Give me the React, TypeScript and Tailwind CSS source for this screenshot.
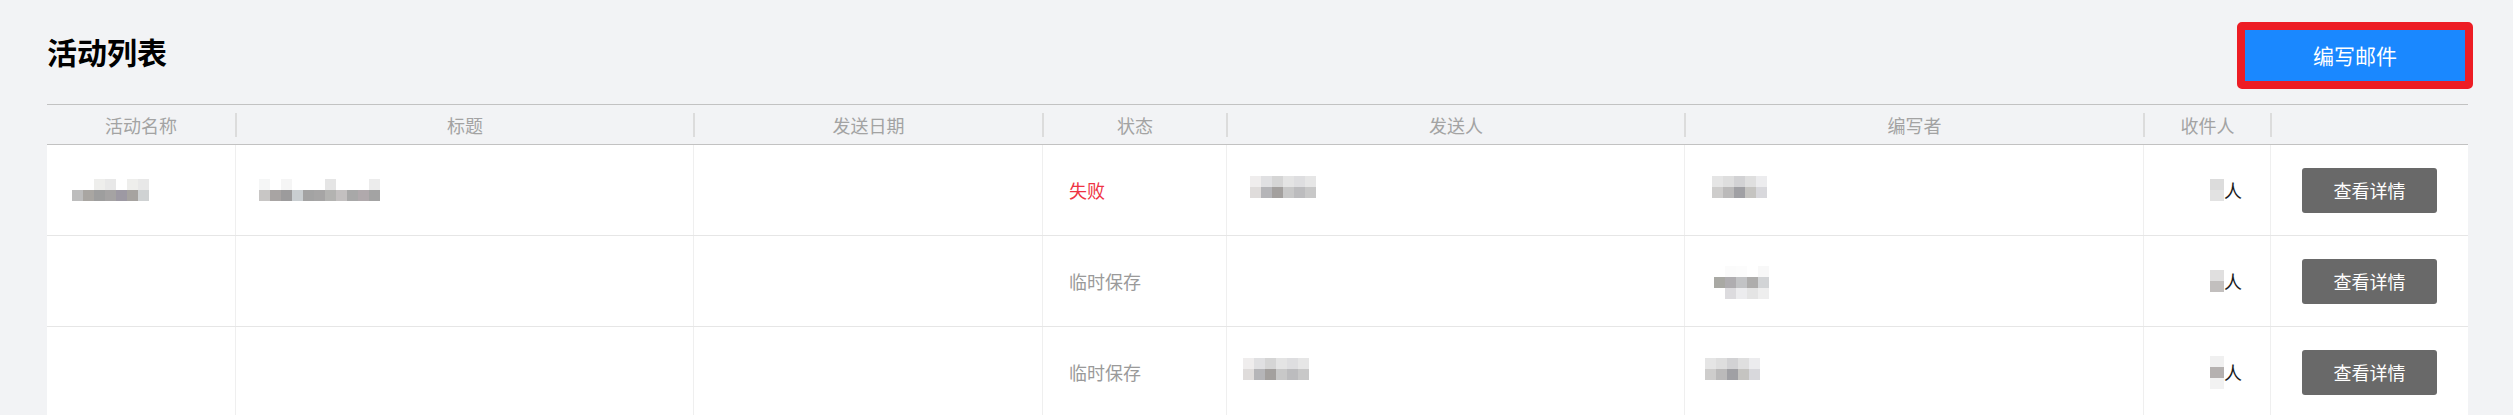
import React from 'react';

const COLS = 'grid-cols-[188px_458px_349px_184px_458px_459px_127px_198px]';

type MosaicProps = { rows: string[][]; size?: number; className?: string };

// pixelated block that stands in for a blurred name
const Mosaic = ({ rows, size = 11, className = '' }: MosaicProps) => (
  <div className={`flex flex-col ${className}`}>
    {rows.map((row, i) => (
      <div key={i} className="flex">
        {row.map((c, j) => (
          <div key={j} style={{ width: size, height: size, background: c }} />
        ))}
      </div>
    ))}
  </div>
);

const nameMosaic = [
  ['#ffffff', '#ffffff', '#eeeeec', '#e8e8e8', '#ffffff', '#eeeeec', '#e8e8e8'],
  ['#bdbdbd', '#a9a6a2', '#9e9e9e', '#a5a3a3', '#9d99a3', '#a6a3a0', '#cfd2d3'],
];

const titleMosaic = [
  ['#f5f6f6', '#ffffff', '#f5f5f5', '#ffffff', '#ffffff', '#ffffff', '#e5e5e5', '#ffffff', '#ffffff', '#ffffff', '#ececec'],
  ['#c8c6c5', '#a8a4a3', '#9c9b9c', '#c9ced1', '#a3a3a3', '#a6a5a5', '#b3b3b1', '#c3c0c0', '#a8a8a8', '#b0a9ac', '#a3a3a3'],
];

const senderMosaic = [
  ['#efeded', '#e0e0e2', '#d5d5d5', '#e4e4e4', '#dedee0', '#e6e6e6'],
  ['#dfdcdb', '#b5b5b8', '#a3a09e', '#c8c8c8', '#bcbcbe', '#c8c8c8'],
];

const writerMosaic = [
  ['#e5e5e5', '#dedede', '#d2d2d4', '#dfdfdf', '#ececee'],
  ['#cecdcc', '#bbbaba', '#a0a0a4', '#c5c4c1', '#d8d8dc'],
];

const writerMosaic2 = [
  ['#ffffff', '#fbfbfb', '#fcfcfc', '#ffffff', '#f8f8f8'],
  ['#a9a9a4', '#afadb0', '#c2c3c5', '#aeadac', '#d2d4d6'],
  ['#ffffff', '#dcdbde', '#ececee', '#e4e4e4', '#eeeeee'],
];

const recipBlocks = [
  ['#dcdcdc', '#e2e2e2'],
  ['#e0dfdf', '#c2bfbe'],
  ['#f0f0f0', '#b5b1b0', '#f2f2f2'],
];

type Row = {
  name: boolean;
  title: boolean;
  status: string;
  failed: boolean;
  sender: string | null;
  writer: 'a' | 'b';
  writerPad: string;
};

const rows: Row[] = [
  { name: true, title: true, status: '失败', failed: true, sender: 'pl-[23px] mb-[6px]', writer: 'a', writerPad: 'pl-[27px] mb-[6px]' },
  { name: false, title: false, status: '临时保存', failed: false, sender: null, writer: 'b', writerPad: 'pl-[29px] mt-[3px]' },
  { name: false, title: false, status: '临时保存', failed: false, sender: 'pl-[16px] mt-[-7px]', writer: 'a', writerPad: 'pl-[20px] mt-[-7px]' },
];

const headers = ['活动名称', '标题', '发送日期', '状态', '发送人', '编写者', '收件人', ''];

const cell = 'flex items-center border-l border-[#efefef]';

const App = () => {
  return (
    <div
      className="min-h-[415px] w-full bg-[#f2f3f5] pl-[47px] pr-[45px] pt-[22px]"
      style={{ fontFamily: '"Noto Sans CJK SC", "Noto Sans", sans-serif' }}
    >
      <div className="flex items-start justify-between">
        <h1 className="mt-[14px] text-[30px] font-bold leading-[30px] text-black">活动列表</h1>
        <button className="mr-[-5px] flex h-[67px] w-[236px] items-center justify-center rounded-[5px] border-[8px] border-[#ed1c24] bg-[#1a88ff] text-[21px] text-white">
          编写邮件
        </button>
      </div>

      <div className="mt-[15px]">
        <div className={`grid ${COLS} h-[41px] border-y border-[#c2c2c2]`}>
          {headers.map((h, i) => (
            <div key={i} className="flex items-center">
              {i > 0 && <div className="h-[24px] w-[2px] bg-[#dcdcdc]" />}
              <div className="flex-1 text-center text-[18px] leading-none text-[#a3a3a3]">{h}</div>
            </div>
          ))}
        </div>

        {rows.map((r, i) => (
          <div key={i} className={`grid ${COLS} h-[91px] border-b border-[#e6e6e6] bg-white`}>
            <div className="flex items-center pl-[25px]">
              {r.name && <Mosaic rows={nameMosaic} />}
            </div>
            <div className={`${cell} pl-[23px]`}>
              {r.title && <Mosaic rows={titleMosaic} />}
            </div>
            <div className={cell} />
            <div className={`${cell} pl-[26px]`}>
              <span className={`text-[18px] leading-none ${r.failed ? 'text-[#ee3344]' : 'text-[#9a9a9a]'}`}>
                {r.status}
              </span>
            </div>
            <div className={cell}>
              {r.sender && <Mosaic rows={senderMosaic} className={r.sender} />}
            </div>
            <div className={cell}>
              <Mosaic rows={r.writer === 'a' ? writerMosaic : writerMosaic2} className={r.writerPad} />
            </div>
            <div className={`${cell} justify-end pr-[28px]`}>
              <div className="flex flex-col">
                {recipBlocks[i].map((c, j) => (
                  <div key={j} className="h-[11px] w-[14px]" style={{ background: c }} />
                ))}
              </div>
              <span className="text-[18px] leading-none text-[#1a1a1a]">人</span>
            </div>
            <div className={`${cell} justify-center`}>
              <button className="h-[45px] w-[135px] rounded-[3px] bg-[#696969] text-[18px] text-white">
                查看详情
              </button>
            </div>
          </div>
        ))}
      </div>
    </div>
  );
};

export default App;
